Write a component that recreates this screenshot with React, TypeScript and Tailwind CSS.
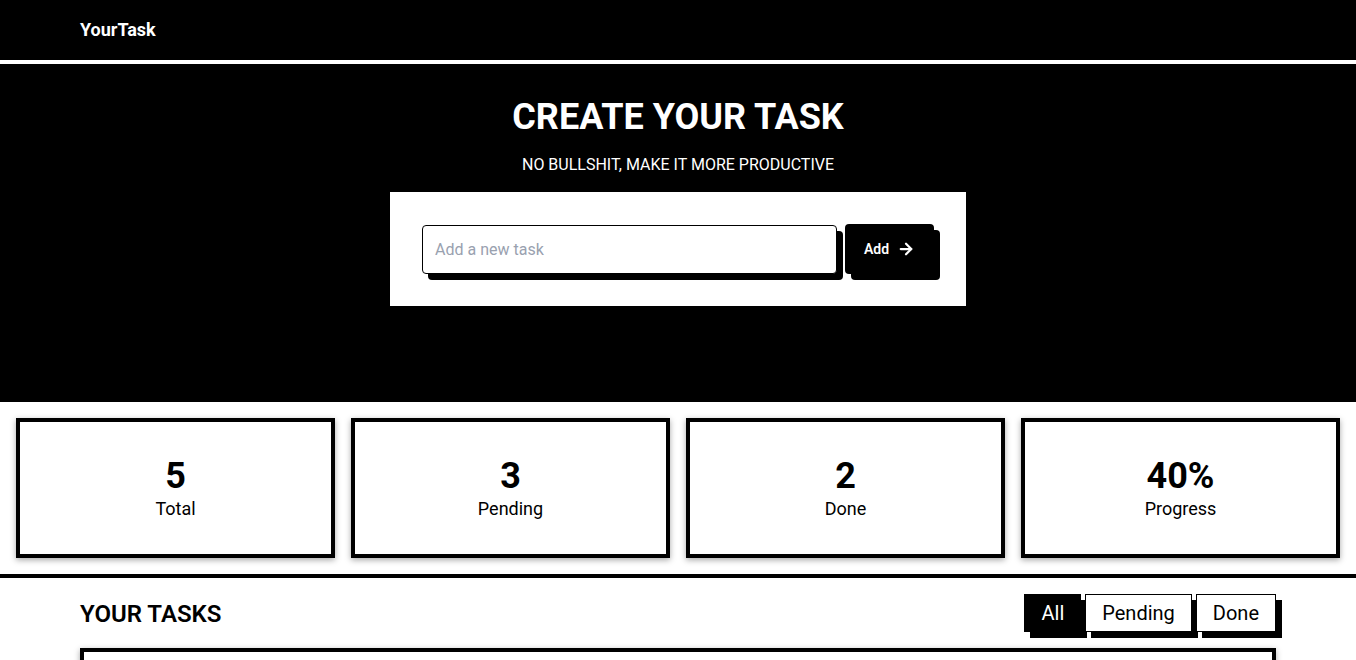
import { ArrowRight } from 'lucide-react';

const STATS = [
  { value: '5', label: 'Total' },
  { value: '3', label: 'Pending' },
  { value: '2', label: 'Done' },
  { value: '40%', label: 'Progress' },
];

const FILTERS = ['All', 'Pending', 'Done'];

export default function App() {
  return (
    <div className="min-h-screen bg-white font-['Roboto',sans-serif] text-black">
      {/* Navbar */}
      <nav className="flex h-[60px] items-center bg-black px-20">
        <span className="text-lg font-bold text-white">YourTask</span>
      </nav>
      <div className="h-1 bg-white" />

      {/* Hero */}
      <section className="flex h-[338px] flex-col items-center bg-black pt-[33px] text-white">
        <h1 className="text-[36px] font-bold leading-[40px]">CREATE YOUR TASK</h1>
        <p className="mt-4 text-base">NO BULLSHIT, MAKE IT MORE PRODUCTIVE</p>
        <div className="mt-[15px] flex h-[114px] w-[576px] items-center gap-2 bg-white px-8">
          <input
            type="text"
            placeholder="Add a new task"
            className="h-[49px] flex-1 rounded-sm border border-black bg-white px-3 text-base text-black shadow-[6px_6px_0_0_#000] outline-none placeholder:text-gray-400"
          />
          <button className="flex h-[50px] w-[89px] items-center justify-center gap-2 rounded-sm bg-black text-sm font-semibold text-white shadow-[6px_6px_0_0_#000]">
            Add
            <ArrowRight className="h-[18px] w-[18px]" strokeWidth={3} />
          </button>
        </div>
      </section>

      {/* Stats */}
      <section className="grid grid-cols-4 gap-4 p-4">
        {STATS.map((s) => (
          <div
            key={s.label}
            className="flex h-[140px] flex-col items-center justify-center border-4 border-black bg-white pt-1 shadow-[0_2px_6px_rgba(0,0,0,0.35)]"
          >
            <span className="text-[36px] font-bold leading-[38px]">{s.value}</span>
            <span className="text-lg">{s.label}</span>
          </div>
        ))}
      </section>
      <div className="h-1 bg-black" />

      {/* Tasks */}
      <section className="px-20 pt-4">
        <div className="flex items-center justify-between">
          <h2 className="pt-[2px] text-2xl font-semibold">YOUR TASKS</h2>
          <div className="flex gap-1">
            {FILTERS.map((f, i) => (
              <button
                key={f}
                className={
                  i === 0
                    ? 'h-[38px] border border-black bg-black px-4 text-xl text-white shadow-[6px_6px_0_0_#000]'
                    : 'h-[38px] border border-black bg-white px-4 text-xl text-black shadow-[6px_6px_0_0_#000]'
                }
              >
                {f}
              </button>
            ))}
          </div>
        </div>
        <div className="mt-4 h-[200px] border-4 border-black shadow-[0_2px_6px_rgba(0,0,0,0.35)]" />
      </section>
    </div>
  );
}
